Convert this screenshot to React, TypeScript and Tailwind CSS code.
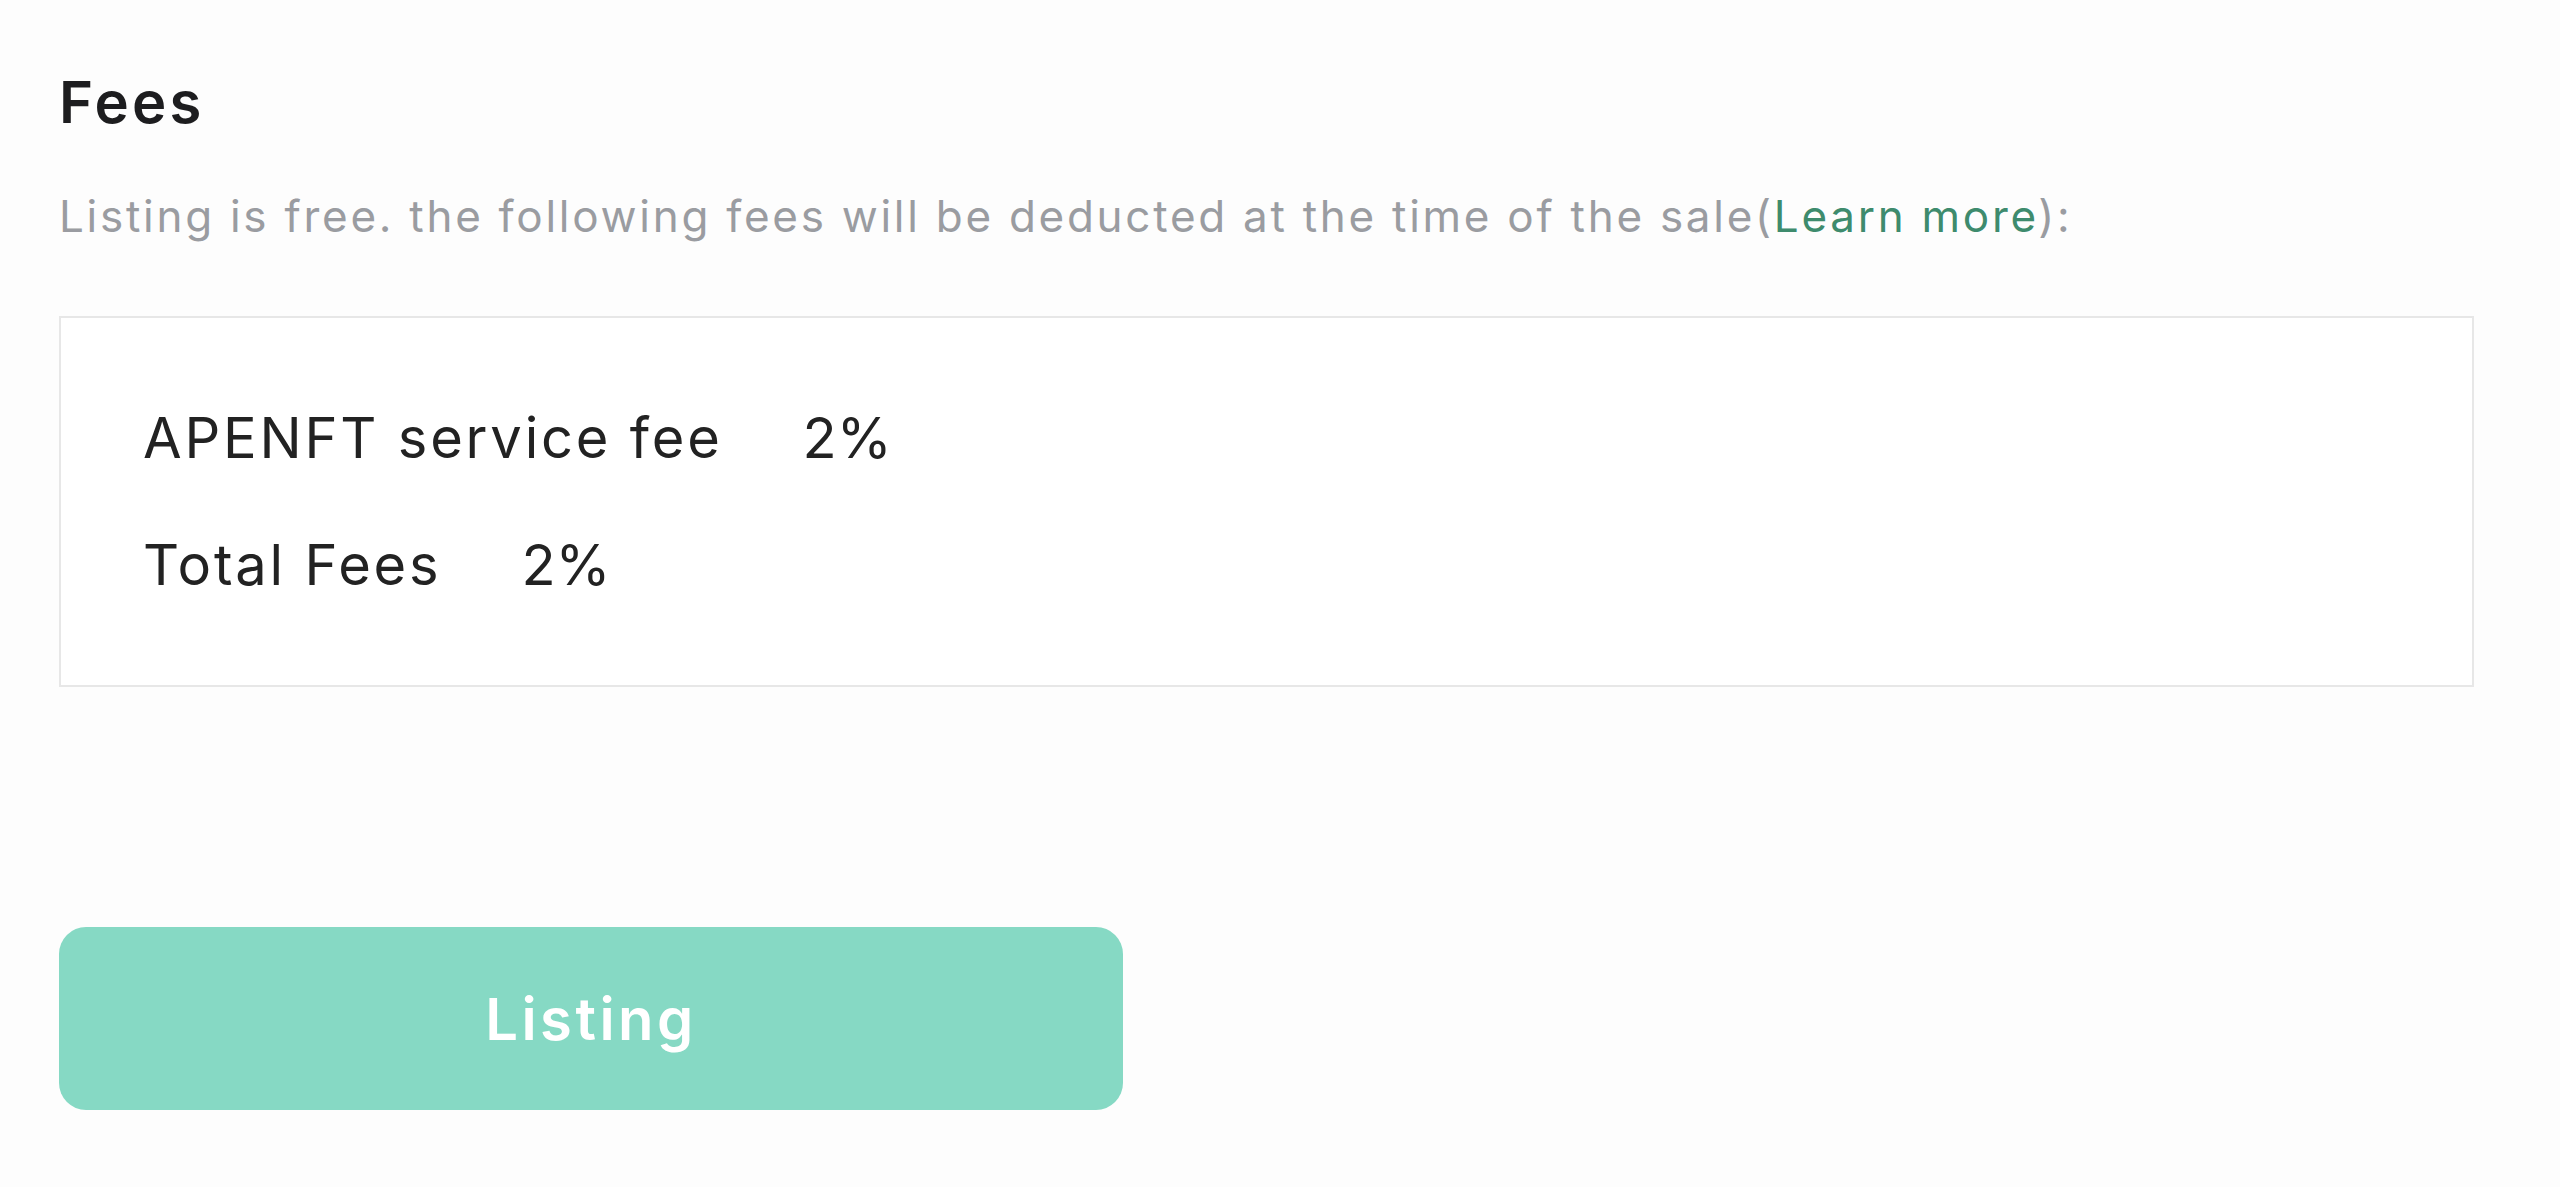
export default function App() {
  const fees = [
    { label: "APENFT service fee", value: "2%" },
    { label: "Total Fees", value: "2%" },
  ];

  return (
    <div className="min-h-[1187px] w-full bg-[#fdfdfd] pl-[59px] pr-[86px] pt-[73px] font-['Inter',_'Liberation_Sans',_sans-serif]">
      <h2 className="text-[58px] font-semibold leading-none tracking-[0.055em] text-[#1d1d1f]">
        Fees
      </h2>

      <p className="mt-[63px] text-[44px] leading-none tracking-[0.062em] text-[#9a9ca1]">
        Listing is free. the following fees will be deducted at the time of the
        sale(<span className="text-[#3e8b6d]">Learn more</span>):
      </p>

      <div className="mt-[78px] flex flex-col gap-[71px] border-2 border-[#e7e7e7] bg-white px-[82px] py-[92px]">
        {fees.map((fee) => (
          <div
            key={fee.label}
            className="flex items-center text-[56px] leading-none tracking-[0.05em] text-[#222222]"
          >
            <span>{fee.label}</span>
            <span className="ml-[80px] tracking-normal">{fee.value}</span>
          </div>
        ))}
      </div>

      <button className="mt-[240px] flex h-[183px] w-[1064px] items-center justify-center rounded-[27px] bg-[#86d9c4] text-[58px] font-semibold leading-none tracking-[0.06em] text-white">
        Listing
      </button>
    </div>
  );
}
